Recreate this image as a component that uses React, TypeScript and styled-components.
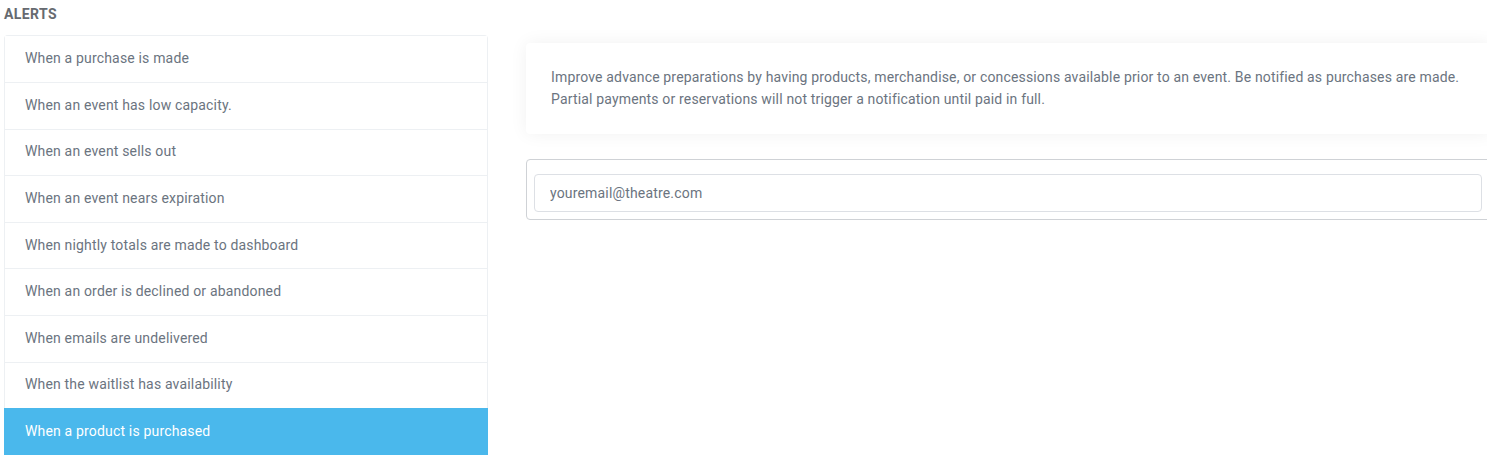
import React from "react";
import styled, { createGlobalStyle } from "styled-components";

const Global = createGlobalStyle`
  html, body { margin: 0; padding: 0; background: #fff; overflow: hidden; }
  body { font-family: Roboto, "Liberation Sans", Arial, sans-serif; }
  * { box-sizing: border-box; }
`;

const Page = styled.div`
  display: flex;
  align-items: flex-start;
  padding-left: 4px;
  width: 1500px;
`;

const LeftCol = styled.div`
  width: 484px;
  flex-shrink: 0;
  display: flex;
  flex-direction: column;
`;

const Heading = styled.h3`
  margin: 0;
  padding-top: 6px;
  height: 35px;
  font-size: 14px;
  line-height: 17px;
  font-weight: 700;
  color: #666a70;
  letter-spacing: 0.4px;
`;

const List = styled.ul`
  list-style: none;
  margin: 0;
  padding: 0;
  border: 1px solid #edf0f3;
  border-bottom: none;
  border-radius: 4px 4px 0 0;
`;

const Item = styled.li<{ $active?: boolean }>`
  height: 46.6px;
  display: flex;
  align-items: center;
  padding-bottom: 2px;
  font-size: 14px;
  letter-spacing: 0.17px;
  color: ${(p) => (p.$active ? "#ffffff" : "#6b7480")};
  background: ${(p) => (p.$active ? "#4ab8ec" : "#ffffff")};
  border-top: 1px solid ${(p) => (p.$active ? "#4ab8ec" : "#edf0f3")};
  margin: ${(p) => (p.$active ? "0 -1px" : "0")};
  padding-left: ${(p) => (p.$active ? "21px" : "20px")};
  &:first-child { border-top: none; height: 46px; }
`;

const RightCol = styled.div`
  margin-left: 38px;
  width: 966px;
  flex-shrink: 0;
  padding-top: 43px;
  display: flex;
  flex-direction: column;
`;

const Card = styled.div`
  background: #fff;
  border-radius: 4px;
  box-shadow: 0 0 18px rgba(0, 0, 0, 0.06);
  padding: 23px 25px 25px 25px;
  font-size: 14px;
  line-height: 22px;
  letter-spacing: 0.16px;
  color: #6b7480;
  height: 91px;
`;

const Fieldset = styled.div`
  margin-top: 25px;
  border: 1px solid #cfd2d6;
  border-radius: 4px;
  padding: 14px 7px 7px 7px;
`;

const Input = styled.input`
  width: 948px;
  height: 38px;
  border: 1px solid #dde0e5;
  border-radius: 4px;
  padding: 0 15px;
  font-family: Roboto, "Liberation Sans", Arial, sans-serif;
  font-size: 14px;
  letter-spacing: 0.17px;
  color: #495057;
  outline: none;
  &::placeholder { color: #6b7480; }
`;

const items = [
  "When a purchase is made",
  "When an event has low capacity.",
  "When an event sells out",
  "When an event nears expiration",
  "When nightly totals are made to dashboard",
  "When an order is declined or abandoned",
  "When emails are undelivered",
  "When the waitlist has availability",
  "When a product is purchased",
];

export default function App() {
  return (
    <>
      <Global />
      <Page>
        <LeftCol>
          <Heading>ALERTS</Heading>
          <List>
            {items.map((t, i) => (
              <Item key={t} $active={i === items.length - 1}>
                {t}
              </Item>
            ))}
          </List>
        </LeftCol>
        <RightCol>
          <Card>
            Improve advance preparations by having products, merchandise, or concessions available prior to an event. Be notified as purchases are made.
            <br />
            Partial payments or reservations will not trigger a notification until paid in full.
          </Card>
          <Fieldset>
            <Input placeholder="youremail@theatre.com" />
          </Fieldset>
        </RightCol>
      </Page>
    </>
  );
}
